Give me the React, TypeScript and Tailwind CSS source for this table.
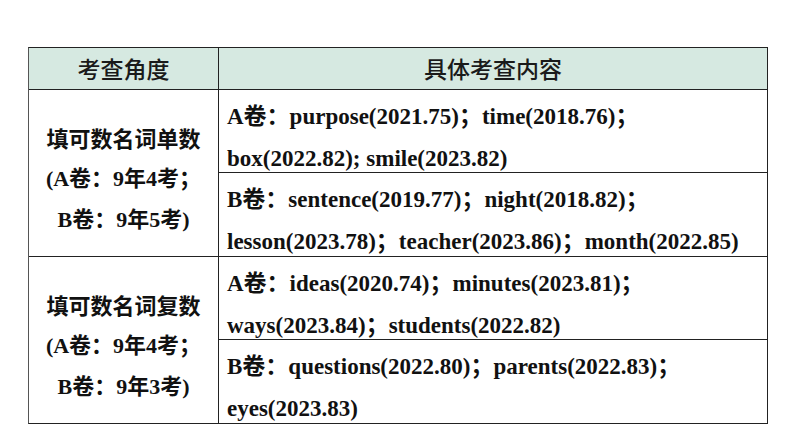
import React from "react";

const serif = { fontFamily: '"Liberation Serif", "Noto Sans CJK SC", serif' };

function Cell({ lines, last }: { lines: string[]; last?: boolean }) {
  return (
    <div
      className={`h-[83px] pl-[8px] pt-[6px] flex flex-col text-[23px] leading-[42px] font-bold text-[#111] whitespace-nowrap ${last ? "" : "border-b border-[#222]"}`}
      style={serif}
    >
      {lines.map((l, i) => (
        <div key={i} className="h-[42px]">{l}</div>
      ))}
    </div>
  );
}

function Group({
  title,
  a,
  b,
  cells,
  last,
}: {
  title: string;
  a: string;
  b: string;
  cells: string[][];
  last?: boolean;
}) {
  return (
    <div className={`grid grid-cols-[190px_1fr] ${last ? "" : "border-b border-[#222]"}`}>
      <div className="border-r border-[#222] flex flex-col items-center justify-center pt-[11px] text-[#111] font-bold whitespace-nowrap">
        <div className="h-[41px] leading-[41px] text-[22px] font-['Noto_Sans_CJK_SC',sans-serif]">{title}</div>
        <div className="h-[41px] leading-[41px] text-[22px]" style={serif}>{a}</div>
        <div className="h-[41px] leading-[41px] text-[22px]" style={serif}>{b}</div>
      </div>
      <div className="flex flex-col">
        <Cell lines={cells[0]} />
        <Cell lines={cells[1]} last />
      </div>
    </div>
  );
}

export default function App() {
  return (
    <div className="w-[794px] h-[447px] bg-white pt-[47px] pl-[28px]">
      <div className="w-[740px] border border-[#222] border-l-[#555]">
        <div className="grid grid-cols-[190px_1fr] h-[42px] bg-[#d6e9e1] border-b border-[#222] text-[23px] leading-[40px] text-[#1a1a1a] font-medium font-['Noto_Sans_CJK_SC',sans-serif]">
          <div className="border-r border-[#222] text-center">考查角度</div>
          <div className="text-center">具体考查内容</div>
        </div>
        <Group
          title="填可数名词单数"
          a="(A卷：9年4考；"
          b="B卷：9年5考)"
          cells={[
            ["A卷：purpose(2021.75)；time(2018.76)；", "box(2022.82); smile(2023.82)"],
            ["B卷：sentence(2019.77)；night(2018.82)；", "lesson(2023.78)；teacher(2023.86)；month(2022.85)"],
          ]}
        />
        <Group
          title="填可数名词复数"
          a="(A卷：9年4考；"
          b="B卷：9年3考)"
          last
          cells={[
            ["A卷：ideas(2020.74)；minutes(2023.81)；", "ways(2023.84)；students(2022.82)"],
            ["B卷：questions(2022.80)；parents(2022.83)；", "eyes(2023.83)"],
          ]}
        />
      </div>
    </div>
  );
}
